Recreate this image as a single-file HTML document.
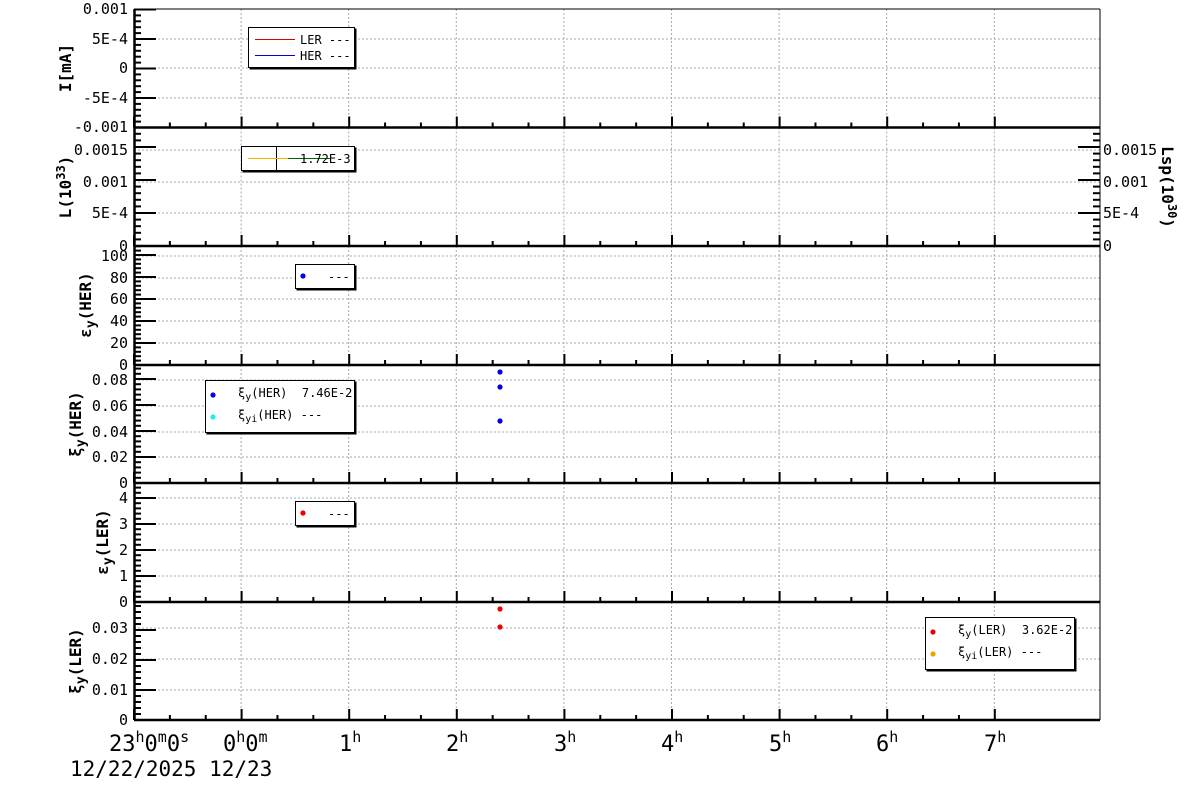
<!DOCTYPE html>
<html><head><meta charset="utf-8"><style>
body{margin:0;background:#fff}
svg{display:block}
text{font-family:"DejaVu Sans Mono","Liberation Mono",monospace;fill:#000}
.yl{font-size:15px;text-anchor:end}
.tt{font-size:16px;font-weight:bold;text-anchor:middle}
.lg{font-size:12px;white-space:pre}
</style></head><body>
<svg id="s" width="1200" height="798" viewBox="0 0 1200 798" xmlns="http://www.w3.org/2000/svg">
<rect width="1200" height="798" fill="#fff"/>
<g id="grid"></g>
<g id="ticks"></g>
<text class="yl" x="128" y="14">0.001</text>
<text class="yl" x="128" y="44">5E-4</text>
<text class="yl" x="128" y="73">0</text>
<text class="yl" x="128" y="103">-5E-4</text>
<text class="yl" x="128" y="132">-0.001</text>
<text class="yl" x="128" y="155">0.0015</text>
<text class="yl" x="128" y="187">0.001</text>
<text class="yl" x="128" y="218">5E-4</text>
<text class="yl" x="128" y="251">0</text>
<text style="font-size:15px" x="1103" y="155">0.0015</text>
<text style="font-size:15px" x="1103" y="187">0.001</text>
<text style="font-size:15px" x="1103" y="218">5E-4</text>
<text style="font-size:15px" x="1103" y="251">0</text>
<text class="yl" x="128" y="261">100</text>
<text class="yl" x="128" y="283">80</text>
<text class="yl" x="128" y="304">60</text>
<text class="yl" x="128" y="326">40</text>
<text class="yl" x="128" y="348">20</text>
<text class="yl" x="128" y="370">0</text>
<text class="yl" x="128" y="385">0.08</text>
<text class="yl" x="128" y="411">0.06</text>
<text class="yl" x="128" y="437">0.04</text>
<text class="yl" x="128" y="462">0.02</text>
<text class="yl" x="128" y="488">0</text>
<text class="yl" x="128" y="503">4</text>
<text class="yl" x="128" y="529">3</text>
<text class="yl" x="128" y="555">2</text>
<text class="yl" x="128" y="581">1</text>
<text class="yl" x="128" y="607">0</text>
<text class="yl" x="128" y="633">0.03</text>
<text class="yl" x="128" y="664">0.02</text>
<text class="yl" x="128" y="695">0.01</text>
<text class="yl" x="128" y="725">0</text>
<text class="tt" transform="translate(71,68) rotate(-90)">I[mA]</text>
<text class="tt" transform="translate(71,187) rotate(-90)">L(10<tspan dy="-6" font-size="12">33</tspan><tspan dy="6">)</tspan></text>
<text class="tt" transform="translate(91,305) rotate(-90)">ε<tspan dy="4" font-size="13">y</tspan><tspan dy="-4">(HER)</tspan></text>
<text class="tt" transform="translate(81,424) rotate(-90)">ξ<tspan dy="4" font-size="13">y</tspan><tspan dy="-4">(HER)</tspan></text>
<text class="tt" transform="translate(108,542) rotate(-90)">ε<tspan dy="4" font-size="13">y</tspan><tspan dy="-4">(LER)</tspan></text>
<text class="tt" transform="translate(81,661) rotate(-90)">ξ<tspan dy="4" font-size="13">y</tspan><tspan dy="-4">(LER)</tspan></text>
<text class="tt" transform="translate(1162,187) rotate(90)">Lsp(10<tspan dy="-6" font-size="12">30</tspan><tspan dy="6">)</tspan></text>
<g style="font-size:22px">
<text x="109" y="751">23<tspan dy="-9" font-size="15">h</tspan><tspan dy="9">0</tspan><tspan dy="-9" font-size="15">m</tspan><tspan dy="9">0</tspan><tspan dy="-9" font-size="15">s</tspan></text>
<text x="223" y="751">0<tspan dy="-9" font-size="15">h</tspan><tspan dy="9">0</tspan><tspan dy="-9" font-size="15">m</tspan></text>
<text x="339" y="751">1<tspan dy="-9" font-size="15">h</tspan></text>
<text x="446" y="751">2<tspan dy="-9" font-size="15">h</tspan></text>
<text x="554" y="751">3<tspan dy="-9" font-size="15">h</tspan></text>
<text x="661" y="751">4<tspan dy="-9" font-size="15">h</tspan></text>
<text x="769" y="751">5<tspan dy="-9" font-size="15">h</tspan></text>
<text x="876" y="751">6<tspan dy="-9" font-size="15">h</tspan></text>
<text x="984" y="751">7<tspan dy="-9" font-size="15">h</tspan></text>
<text x="70" y="776" font-size="21">12/22/2025 12/23</text>
</g>
<g fill="#0000ee"><circle cx="500" cy="372" r="2.6"/><circle cx="500" cy="387" r="2.6"/><circle cx="500" cy="421" r="2.6"/></g>
<g fill="#ee0000"><circle cx="500" cy="609" r="2.6"/><circle cx="500" cy="627" r="2.6"/></g>
<g stroke="#000" fill="#fff">
<rect x="250" y="29" width="106" height="40" fill="#000"/><rect x="248.5" y="27.5" width="106" height="40"/>
<rect x="243" y="148" width="113" height="24" fill="#000"/><rect x="241.5" y="146.5" width="113" height="24"/>
<rect x="297" y="266" width="59" height="24" fill="#000"/><rect x="295.5" y="264.5" width="59" height="24"/>
<rect x="207" y="382" width="149" height="52" fill="#000"/><rect x="205.5" y="380.5" width="149" height="52"/>
<rect x="297" y="503" width="59" height="24" fill="#000"/><rect x="295.5" y="501.5" width="59" height="24"/>
<rect x="927" y="619" width="149" height="52" fill="#000"/><rect x="925.5" y="617.5" width="149" height="52"/>
</g>
<line x1="255" y1="39.5" x2="295" y2="39.5" stroke="#d00"/>
<line x1="255" y1="55.5" x2="295" y2="55.5" stroke="#00d"/>
<text class="lg" x="300" y="44">LER ---</text>
<text class="lg" x="300" y="60">HER ---</text>
<line x1="276.5" y1="147" x2="276.5" y2="170" stroke="#000"/>
<line x1="248" y1="158.5" x2="288" y2="158.5" stroke="#f0b000"/>
<line x1="288" y1="158.5" x2="330" y2="158.5" stroke="#006000"/>
<text class="lg" x="300" y="163">1.72E-3</text>
<circle cx="303" cy="276" r="2.6" fill="#00e"/><text class="lg" x="328" y="281">---</text>
<circle cx="213" cy="395" r="2.6" fill="#00e"/>
<text class="lg" x="238" y="397">ξ<tspan dy="3" font-size="10">y</tspan><tspan dy="-3">(HER)  7.46E-2</tspan></text>
<circle cx="213" cy="417" r="2.6" fill="#2ee"/>
<text class="lg" x="238" y="419">ξ<tspan dy="3" font-size="10">yi</tspan><tspan dy="-3">(HER) ---</tspan></text>
<circle cx="303" cy="513" r="2.6" fill="#e00"/><text class="lg" x="328" y="518">---</text>
<circle cx="933" cy="632" r="2.6" fill="#e00"/>
<text class="lg" x="958" y="634">ξ<tspan dy="3" font-size="10">y</tspan><tspan dy="-3">(LER)  3.62E-2</tspan></text>
<circle cx="933" cy="654" r="2.6" fill="#f0a000"/>
<text class="lg" x="958" y="656">ξ<tspan dy="3" font-size="10">yi</tspan><tspan dy="-3">(LER) ---</tspan></text>
</svg>
<script>
var NS="http://www.w3.org/2000/svg",G=document.getElementById('grid'),T=document.getElementById('ticks');
function L(p,x1,y1,x2,y2,st,w,d){var l=document.createElementNS(NS,'line');l.setAttribute('x1',x1);l.setAttribute('y1',y1);l.setAttribute('x2',x2);l.setAttribute('y2',y2);l.setAttribute('stroke',st);l.setAttribute('stroke-width',w);if(d)l.setAttribute('stroke-dasharray',d);p.appendChild(l);}
var X0=134,X1=1100,H=107.6;
var P=[[9,127.5,[9,39,68,98,127.5]],[127.5,246,[150,182,213,246]],[246,365,[256,278,299,321,343,365]],[365,483,[380,406,432,457,483]],[483,602,[498,524,550,576,602]],[602,720,[628,659,690,720]]];
P.forEach(function(p,i){var top=p[0],bot=p[1],maj=p[2];
 for(var h=0;h<8;h++){var x=X0+H*(h+1)-0.5;if(x<X1)L(G,x,top,x,bot,'#aaa',1,'2,2');}
 maj.forEach(function(y){if(y>top+1&&y<bot-1)L(G,X0,y,X1,y,'#aaa',1,'2,2');});
 var step=(maj[maj.length-1]-maj[maj.length-2]);
 for(var y=bot;y>=top-0.1;y-=step){L(T,X0,y,X0+22,y,'#000',2);if(i==1)L(T,X1,y,X1-22,y,'#000',2);
   for(var k=1;k<5;k++){var yy=y-step*k/5;if(yy>top)L(T,X0,yy,X0+7,yy,'#000',2);if(i==1&&yy>top)L(T,X1,yy,X1-7,yy,'#000',2);}}
 for(var m=0;m<=8*3;m++){var x=X0+H*m/3;if(x>X1)break;var big=m%3==0;L(T,x,bot,x,bot-(big?11:5),'#000',2);}
 L(T,X0,bot,X1,bot,'#000',2.5);
});
L(T,X0,9,X1,9,'#000',1);L(T,X0+0.5,9,X0+0.5,720,'#000',2.5);L(T,X1,9,X1,720,'#000',1);
</script>
</body></html>
